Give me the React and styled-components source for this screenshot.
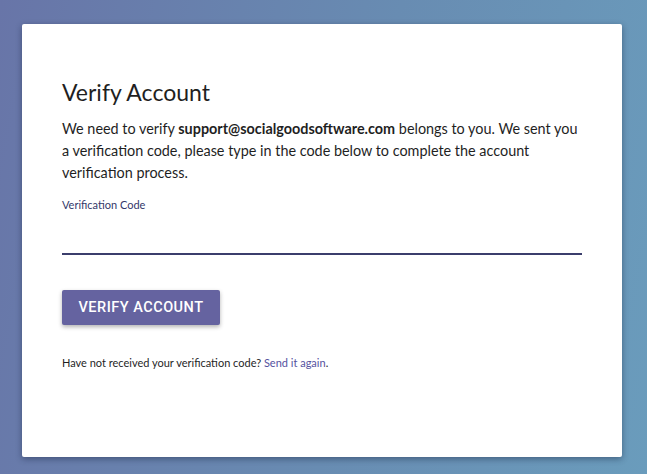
import React from "react";
import styled, { createGlobalStyle } from "styled-components";

const GlobalStyle = createGlobalStyle`
	html, body {
		margin: 0;
		padding: 0;
		height: 100%;
	}
	#root {
		height: 100%;
	}
`;

const Page = styled("div")`
	box-sizing: border-box;
	width: 100%;
	min-height: 100vh;
	padding: 24px 25px 17px 22px;
	background: linear-gradient(100deg, #6875a8 0%, #688cb2 55%, #6a9cbc 100%);
	font-family: "Lato", "Noto Sans", sans-serif;
	color: #222;
`;

const Card = styled("div")`
	box-sizing: border-box;
	width: 600px;
	height: 433px;
	background: #fff;
	border-radius: 2px;
	box-shadow: 0 2px 6px rgba(20, 30, 60, 0.45);
	padding: 54px 40px 0 40px;
`;

const Title = styled("h1")`
	margin: 0 0 12px;
	font-size: 23px;
	font-weight: 400;
	line-height: 28px;
	color: #1f1f1f;
`;

const Text = styled("p")`
	margin: 0;
	font-size: 14.4px;
	line-height: 22px;
	color: #1f1f1f;
	padding-right: 2px;
`;

const Label = styled("label")`
	display: block;
	margin-top: 14px;
	font-size: 11px;
	line-height: 14px;
	color: #34386a;
`;

const Input = styled("input")`
	display: block;
	box-sizing: border-box;
	width: 520px;
	height: 36px;
	margin-top: 7px;
	border: none;
	border-bottom: 2px solid #3b3e6c;
	outline: none;
	font-size: 15px;
	font-family: inherit;
	background: transparent;
`;

const Button = styled("button")`
	margin-top: 35px;
	width: 158px;
	height: 35px;
	border: none;
	border-radius: 2px;
	background: #6563a0;
	color: #fff;
	font-family: "Roboto", "Liberation Sans", sans-serif;
	font-size: 14.5px;
	font-weight: 500;
	letter-spacing: 0.5px;
	text-transform: uppercase;
	box-shadow: 0 2px 4px rgba(0, 0, 0, 0.3);
	cursor: pointer;
`;

const Footer = styled("p")`
	margin: 31px 0 0;
	font-size: 11px;
	line-height: 14px;
	color: #1f1f1f;
`;

const Link = styled("a")`
	color: #5552a0;
	text-decoration: none;
`;

export default function App() {
	return (
		<>
			<GlobalStyle />
			<Page>
				<Card>
					<Title>Verify Account</Title>
					<Text>
						We need to verify <strong>support@socialgoodsoftware.com</strong>{" "}
						belongs to you. We sent you a verification code, please type in
						the code below to complete the account verification process.
					</Text>
					<Label htmlFor="code">Verification Code</Label>
					<Input id="code" type="text" />
					<Button>Verify Account</Button>
					<Footer>
						Have not received your verification code?{" "}
						<Link href="#">Send it again</Link>.
					</Footer>
				</Card>
			</Page>
		</>
	);
}
